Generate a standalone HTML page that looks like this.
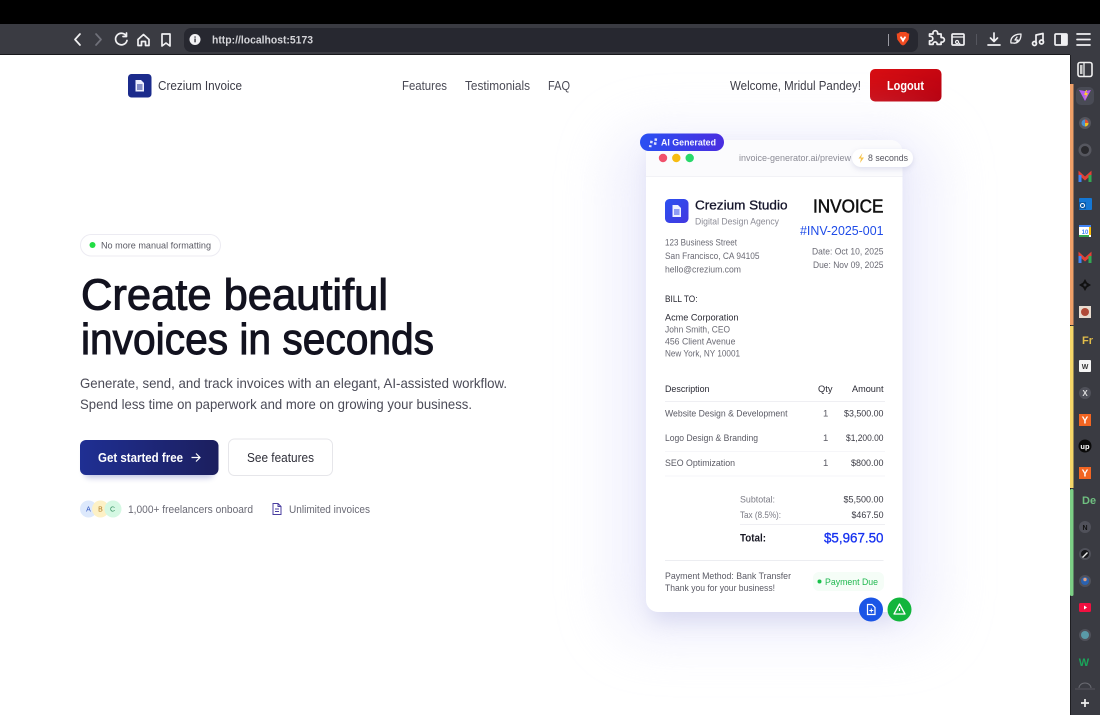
<!DOCTYPE html>
<html><head><meta charset="utf-8"><title>Crezium Invoice</title>
<style>
html,body{margin:0;padding:0;width:1100px;height:715px;overflow:hidden;background:#fff}
svg{display:block;filter:blur(.3px)}
text{font-family:"Liberation Sans",sans-serif;white-space:pre}
.b{font-weight:700}
.s{stroke-width:.3px;stroke:currentColor}
</style></head><body>
<svg width="1100" height="715" viewBox="0 0 1100 715" xmlns="http://www.w3.org/2000/svg">
<defs>
<linearGradient id="navy" x1="0" x2="1" y1="0" y2="0"><stop offset="0" stop-color="#1f2f93"/><stop offset="1" stop-color="#1c1f5e"/></linearGradient>
<linearGradient id="red" x1="0" x2="1" y1="0" y2="1"><stop offset="0" stop-color="#d90d12"/><stop offset="1" stop-color="#b50010"/></linearGradient>
<linearGradient id="ai" x1="0" x2="1" y1="0" y2="0"><stop offset="0" stop-color="#2a50f2"/><stop offset="1" stop-color="#4a2ee0"/></linearGradient>
<linearGradient id="lg" x1="0" x2="1" y1="0" y2="1"><stop offset="0" stop-color="#2b50f0"/><stop offset="1" stop-color="#4338e0"/></linearGradient>
<filter id="glow" x="-50%" y="-50%" width="200%" height="200%"><feGaussianBlur stdDeviation="26"/></filter>
<filter id="sh" x="-30%" y="-30%" width="160%" height="160%"><feGaussianBlur stdDeviation="10"/></filter>
<filter id="sh2" x="-50%" y="-80%" width="200%" height="260%"><feGaussianBlur stdDeviation="3"/></filter>
</defs>

<!-- page -->
<rect x="0" y="55" width="1070" height="660" fill="#fff"/>

<!-- browser chrome -->
<rect x="0" y="0" width="1100" height="24" fill="#000"/>
<rect x="0" y="24" width="1100" height="31" fill="#3a3b42"/>
<rect x="0" y="54" width="1070" height="1" fill="#18181c"/>
<rect x="184" y="28" width="734" height="24" rx="7" fill="#272830"/>
<g fill="none" stroke="#f0f0f2" stroke-width="1.700" stroke-linecap="round" stroke-linejoin="round">
<path d="M80 34l-5 5.500 5 5.500"/>
<path d="M96 34l5 5.500-5 5.500" stroke="#70717a"/>
<path d="M126 35.500a5.800 5.800 0 1 0 1 5M126.500 33v3.500h-3.500"/>
<path d="M138 39.500l5.500-5 5.500 5v6h-3.500v-4h-4v4H138z"/>
<path d="M162 34h8v12l-4-3-4 3z"/>
<path d="M930 36h3.500v-1a2.300 2.300 0 0 1 4.600 0v1h3.500v3.500h1a2.300 2.300 0 0 1 0 4.600h-1v2.300h-4v-1a2.100 2.100 0 0 0-4 0v1H930v-3.500h1a2.300 2.300 0 0 0 0-4.600h-1z" transform="translate(-.5 -2)"/>
<rect x="952" y="34" width="12" height="11" rx="1"/>
<path d="M952 37h12M957 40.500a1.500 1.500 0 1 0 .1 0M959 43l1 1" stroke-width="1.200"/>
<path d="M994 33v8M990.500 38l3.500 3.500 3.500-3.500M988 45h12"/>
<path d="M1011 43c-1-5 3-9 10-9 0 6-3 10-8 9zM1017 37l-2 3h3l-2 3" stroke-width="1.300"/>
<path d="M1036 43V35l7-1.500V41"/><circle cx="1034.500" cy="43.500" r="2"/><circle cx="1041.500" cy="42" r="2"/>
<rect x="1055" y="34" width="12" height="11" rx="1"/>
<path d="M1077 34h13M1077 39.500h13M1077 45h13"/>
</g>
<rect x="1061" y="34" width="6" height="11" fill="#f0f0f2"/>
<circle cx="195" cy="39.500" r="5.500" fill="#f2f2f4"/>
<rect x="194.400" y="38.500" width="1.300" height="3.800" fill="#272830"/><rect x="194.400" y="36.400" width="1.300" height="1.300" fill="#272830"/>
<text x="212" y="43.500" font-size="11" class="b" fill="#d4d4d8" textLength="101" lengthAdjust="spacingAndGlyphs">http://localhost:5173</text>
<rect x="888" y="34" width="1" height="12" fill="#9a9aa2"/>
<rect x="976" y="34" width="1" height="11" fill="#55565e"/>
<path d="M898 33.500l2-1.500h6l2 1.500 1.300 0-.6 6-3.700 5-2 1-2-1-3.700-5-.6-6z" fill="#ef4a20"/>
<path d="M901 36l2 2.500 2-2.500 1 1.500-2 3-1 2-1-2-2-3z" fill="#fff"/>

<!-- sidebar -->
<rect x="1070" y="55" width="30" height="660" fill="#3a3b42"/>
<rect x="1070" y="55" width="1" height="660" fill="#1e1e22"/>
<rect x="1070" y="84" width="3.500" height="241" fill="#f0a068"/>
<rect x="1070" y="326" width="3.500" height="162" fill="#f6d768"/>
<rect x="1070" y="489" width="3.500" height="107" rx="1.500" fill="#7ccf85"/>
<rect x="1078" y="62.500" width="14" height="14" rx="2" fill="none" stroke="#f0f0f0" stroke-width="1.600"/>
<path d="M1084 63v13" stroke="#eee" stroke-width="1.300"/><rect x="1080" y="65" width="2.500" height="9" fill="#ccc"/>
<rect x="1076" y="87" width="18" height="18" rx="5" fill="#494b55"/>
<path d="M1079 90l6 1 6-1-6 11z" fill="#b45cf0"/><path d="M1086 90l-2 5h2l-1 4 3-6h-2l1-3z" fill="#ffd028"/>
<circle cx="1085" cy="123" r="6" fill="#55565e"/><circle cx="1085" cy="123" r="3.500" fill="#4a90d0"/><path d="M1085 119.500a3.500 3.500 0 0 1 3.500 3.500h-3.500z" fill="#e04f30"/><path d="M1085 123h3.500a3.500 3.500 0 0 1-3.500 3.500z" fill="#f0c020"/>
<circle cx="1085" cy="150" r="6.500" fill="#56575f"/><circle cx="1085" cy="150" r="4" fill="#2a2a2e"/>
<g stroke-width="3" fill="none">
<path d="M1080 182v-8l5 4.500 5-4.500v8" stroke="#e44035"/><path d="M1090 175v7" stroke="#34a853"/><path d="M1080 175v7" stroke="#4285f4"/>
<path d="M1080 263v-8l5 4.500 5-4.500v8" stroke="#e44035"/><path d="M1090 256v7" stroke="#34a853"/><path d="M1080 256v7" stroke="#4285f4"/>
</g>
<rect x="1079" y="198" width="13" height="12" rx="1" fill="#1477d4"/><rect x="1079" y="202" width="7" height="7" fill="#0a5aa8"/><circle cx="1082.500" cy="205.500" r="2" fill="none" stroke="#fff"/>
<rect x="1079" y="225" width="12" height="12" fill="#fff"/><path d="M1079 225h12v2h-12z" fill="#4285f4"/><path d="M1079 235h10v2h-10z" fill="#34a853"/><path d="M1091 227v8h-2v-8z" fill="#fbbc04"/>
<text x="1085" y="234" font-size="6" text-anchor="middle" fill="#4285f4" class="b">10</text>
<path d="M1085 279l2 3.500 4 2.500-4 2.500-2 3.500-2-3.500-4-2.500 4-2.500z" fill="#111"/><circle cx="1085" cy="285" r="1.500" fill="#3a3b42"/>
<rect x="1079" y="306" width="12" height="12" fill="#e8dcd0"/><circle cx="1085" cy="312" r="4" fill="#b04a38"/>
<text x="1082" y="344" font-size="11" class="b" fill="#e2bd4a">Fr</text>
<rect x="1079" y="360" width="12" height="12" rx="1" fill="#f4f4f4"/><text x="1085" y="369" font-size="7" class="b" text-anchor="middle" fill="#333">W</text>
<circle cx="1085" cy="393" r="6" fill="#50515a"/><text x="1085" y="396" font-size="8" class="b" text-anchor="middle" fill="#ddd">X</text>
<rect x="1079" y="414" width="12" height="12" fill="#f26522"/><text x="1085" y="423.500" font-size="10" class="b" text-anchor="middle" fill="#fff">Y</text>
<circle cx="1085" cy="446" r="6.500" fill="#0a0a0a"/><text x="1085" y="449" font-size="7.500" class="b" text-anchor="middle" fill="#fff">up</text>
<rect x="1079" y="467" width="12" height="12" fill="#f26522"/><text x="1085" y="476.500" font-size="10" class="b" text-anchor="middle" fill="#fff">Y</text>
<text x="1082" y="504" font-size="11" class="b" fill="#6fbf80">De</text>
<circle cx="1085" cy="527" r="6" fill="#50515a"/><text x="1085" y="530" font-size="7" class="b" text-anchor="middle" fill="#111">N</text>
<circle cx="1085" cy="554" r="6" fill="#50515a"/><circle cx="1085" cy="554" r="4" fill="#18181c"/><path d="M1082 557l5-5 1 1-5 5z" fill="#eee"/>
<circle cx="1085" cy="581" r="6" fill="#50515a"/><circle cx="1085" cy="581" r="4" fill="#2a62b0"/><circle cx="1085" cy="579.500" r="1.700" fill="#e0a080"/>
<rect x="1079" y="603" width="12" height="9" rx="1.500" fill="#f01040"/><path d="M1084 605.500l3 2-3 2z" fill="#fff"/>
<circle cx="1085" cy="635" r="6" fill="#50515a"/><circle cx="1085" cy="635" r="4" fill="#5a9aa8"/>
<text x="1084" y="666" font-size="11" class="b" text-anchor="middle" fill="#1aa55a">W</text>
<path d="M1075 689h20" stroke="#55565e"/><path d="M1079 688a6 5 0 0 1 12 0" fill="none" stroke="#6a6b72"/>
<path d="M1085 699v8M1081 703h8" stroke="#eee" stroke-width="1.700"/>

<!-- nav -->
<rect x="128" y="74" width="23.500" height="23.500" rx="3.500" fill="#1b2b8c"/>
<path d="M135.500 80h5.500l3 3v8.500h-8.500z" fill="#eef0ff"/><path d="M137 85h5.500M137 87h5.500M137 89h5.500" stroke="#1b2b8c" stroke-width="1"/>
<text x="158" y="90" font-size="12.500" fill="#3b3b46" textLength="84" lengthAdjust="spacingAndGlyphs">Crezium Invoice</text>
<text x="402" y="90" font-size="12.500" fill="#4a4a55" textLength="45" lengthAdjust="spacingAndGlyphs">Features</text>
<text x="465" y="90" font-size="12.500" fill="#4a4a55" textLength="65" lengthAdjust="spacingAndGlyphs">Testimonials</text>
<text x="548" y="90" font-size="12.500" fill="#4a4a55" textLength="22" lengthAdjust="spacingAndGlyphs">FAQ</text>
<text x="730" y="90" font-size="12.500" fill="#3a3a44" textLength="131" lengthAdjust="spacingAndGlyphs">Welcome, Mridul Pandey!</text>
<rect x="870" y="69" width="71.500" height="32.500" rx="5" fill="url(#red)"/>
<text x="887" y="90" font-size="13" class="b" fill="#fff" textLength="37" lengthAdjust="spacingAndGlyphs">Logout</text>

<!-- hero -->
<rect x="80.500" y="234.500" width="140" height="21.500" rx="10.700" fill="#fff" stroke="#ecebf2"/>
<circle cx="92.500" cy="245" r="3" fill="#22dd44"/>
<text x="101" y="248.500" font-size="9.500" fill="#5a5a64" textLength="110" lengthAdjust="spacingAndGlyphs">No more manual formatting</text>
<text x="81" y="309.500" font-size="44" fill="#12121f" stroke="#12121f" stroke-width="1" textLength="307" lengthAdjust="spacingAndGlyphs">Create beautiful</text>
<text x="81" y="354" font-size="44" fill="#12121f" stroke="#12121f" stroke-width="1" textLength="353" lengthAdjust="spacingAndGlyphs">invoices in seconds</text>
<text x="80" y="388" font-size="14" fill="#4b4b57" textLength="427" lengthAdjust="spacingAndGlyphs">Generate, send, and track invoices with an elegant, AI-assisted workflow.</text>
<text x="80" y="409" font-size="14" fill="#4b4b57" textLength="392" lengthAdjust="spacingAndGlyphs">Spend less time on paperwork and more on growing your business.</text>

<rect x="84" y="446" width="130" height="32" rx="6" fill="#2a3aa0" opacity=".28" filter="url(#sh2)"/>
<rect x="80" y="440" width="138.500" height="35" rx="6" fill="url(#navy)"/>
<text x="98" y="462" font-size="13" class="b" fill="#fff" textLength="85" lengthAdjust="spacingAndGlyphs">Get started free</text>
<path d="M191.500 457.500h8M196 453.500l4 4-4 4" fill="none" stroke="#fff" stroke-width="1.200"/>
<rect x="228.500" y="439" width="104" height="36.500" rx="6" fill="#fff" stroke="#e6e6ea"/>
<text x="247" y="462" font-size="13" fill="#2f2f39" textLength="67" lengthAdjust="spacingAndGlyphs">See features</text>

<circle cx="88.500" cy="509" r="8.500" fill="#dde9fc"/><circle cx="100.500" cy="509" r="8.500" fill="#fdf1c6"/><circle cx="113" cy="509" r="8.500" fill="#d5f8e3"/>
<text x="88.500" y="511.500" font-size="7" text-anchor="middle" fill="#2f55c0">A</text>
<text x="100.500" y="511.500" font-size="7" text-anchor="middle" fill="#b07a20">B</text>
<text x="112.500" y="511.500" font-size="7" text-anchor="middle" fill="#2d8a5a">C</text>
<text x="128" y="513" font-size="11" fill="#6a6a75" textLength="125" lengthAdjust="spacingAndGlyphs">1,000+ freelancers onboard</text>
<path d="M273 503.500h5l3 3v8h-8zM278 503.500v3h3M275 509h4M275 511.500h4" fill="none" stroke="#4b3fa0" stroke-width="1"/>
<text x="289" y="513" font-size="11" fill="#6a6a75" textLength="81" lengthAdjust="spacingAndGlyphs">Unlimited invoices</text>

<!-- card glow + card -->
<rect x="610" y="130" width="330" height="510" rx="40" fill="#e6e6fb" opacity=".6" filter="url(#glow)"/>
<rect x="650" y="150" width="248" height="472" rx="12" fill="#c6c8e8" opacity=".55" filter="url(#sh)"/>
<rect x="646" y="140" width="256.500" height="472" rx="12" fill="#fff"/>
<path d="M646 176v-24a12 12 0 0 1 12-12h232.500a12 12 0 0 1 12 12v24z" fill="#fbfbfd"/>
<rect x="646" y="176" width="256.500" height="1" fill="#f2f2f6"/>

<rect x="640" y="133.500" width="84" height="17.500" rx="8.700" fill="url(#ai)"/>
<path d="M650 141h2.500v2.500H650zM654 138h2.500v2.500H654zM654 142h2.500v2.500H654zM649.500 145.500h2.500v2h-2.500z" fill="#dfe4ff" transform="rotate(8 653 143)"/>
<text x="661" y="145.700" font-size="9.500" class="b" fill="#f4f4ff" textLength="55" lengthAdjust="spacingAndGlyphs">AI Generated</text>
<circle cx="663" cy="158" r="4.200" fill="#f0506c"/><circle cx="676.300" cy="158" r="4.200" fill="#f7bc12"/><circle cx="689.700" cy="158" r="4.200" fill="#28d86a"/>
<text x="739" y="161" font-size="9.500" fill="#8c8c96" textLength="112" lengthAdjust="spacingAndGlyphs">invoice-generator.ai/preview</text>
<rect x="852" y="151" width="61" height="18" rx="9" fill="#b9bbd8" opacity=".45" filter="url(#sh2)"/>
<rect x="852" y="149" width="61" height="18" rx="9" fill="#fff"/>
<path d="M862.500 153l-4 5.500h2.500l-1 4.500 4-5.500H861z" fill="#f7c34a"/>
<text x="868" y="161" font-size="9.500" fill="#55555f" textLength="40" lengthAdjust="spacingAndGlyphs">8 seconds</text>

<rect x="665" y="199" width="23.500" height="24" rx="4.500" fill="url(#lg)"/>
<path d="M672.500 205h5.500l3 3v9h-8.500z" fill="#eef0ff"/><path d="M674 210h5.500M674 212h5.500M674 214h5.500" stroke="#3048e8" stroke-width="1"/>
<text x="695" y="209.500" font-size="13" fill="#14142a" class="s" style="color:#14142a" textLength="92.500" lengthAdjust="spacingAndGlyphs">Crezium Studio</text>
<text x="695" y="224.500" font-size="9.500" fill="#8c8c96" textLength="84" lengthAdjust="spacingAndGlyphs">Digital Design Agency</text>
<text x="813" y="212.500" font-size="18" fill="#111" stroke="#111" stroke-width=".5" textLength="70.500" lengthAdjust="spacingAndGlyphs">INVOICE</text>
<text x="800" y="235" font-size="12.500" fill="#1f4ce8" textLength="83.500" lengthAdjust="spacingAndGlyphs">#INV-2025-001</text>
<g font-size="9.500" fill="#6a6a74">
<text x="665" y="245.500" textLength="72" lengthAdjust="spacingAndGlyphs">123 Business Street</text>
<text x="665" y="259" textLength="94.500" lengthAdjust="spacingAndGlyphs">San Francisco, CA 94105</text>
<text x="665" y="272.500" textLength="76" lengthAdjust="spacingAndGlyphs">hello@crezium.com</text>
<text x="812" y="254.500" textLength="71.500" lengthAdjust="spacingAndGlyphs">Date: Oct 10, 2025</text>
<text x="813" y="268" textLength="70.500" lengthAdjust="spacingAndGlyphs">Due: Nov 09, 2025</text>
</g>
<text x="665" y="302" font-size="9.500" fill="#2a2a34" textLength="32.500" lengthAdjust="spacingAndGlyphs">BILL TO:</text>
<text x="665" y="320.500" font-size="9.500" fill="#2a2a34" textLength="73.500" lengthAdjust="spacingAndGlyphs">Acme Corporation</text>
<g font-size="9.500" fill="#6a6a74">
<text x="665" y="332.500" textLength="65" lengthAdjust="spacingAndGlyphs">John Smith, CEO</text>
<text x="665" y="344.500" textLength="70.500" lengthAdjust="spacingAndGlyphs">456 Client Avenue</text>
<text x="665" y="356.500" textLength="75" lengthAdjust="spacingAndGlyphs">New York, NY 10001</text>
</g>
<g font-size="9.500" fill="#2a2a34">
<text x="665" y="392" textLength="44.500" lengthAdjust="spacingAndGlyphs">Description</text>
<text x="818" y="392" textLength="14.500" lengthAdjust="spacingAndGlyphs">Qty</text>
<text x="852" y="392" textLength="31.500" lengthAdjust="spacingAndGlyphs">Amount</text>
</g>
<rect x="665" y="401" width="220" height="1" fill="#efeff3"/>
<rect x="665" y="451" width="220" height="1" fill="#f6f6f9"/>
<rect x="665" y="475.500" width="220" height="1" fill="#f6f6f9"/>
<g font-size="9.500" fill="#5a5a64">
<text x="665" y="416.500" textLength="122.500" lengthAdjust="spacingAndGlyphs">Website Design &amp; Development</text>
<text x="665" y="441" textLength="93" lengthAdjust="spacingAndGlyphs">Logo Design &amp; Branding</text>
<text x="665" y="466" textLength="70" lengthAdjust="spacingAndGlyphs">SEO Optimization</text>
<text x="823" y="416.500">1</text><text x="823" y="441">1</text><text x="823" y="466">1</text>
</g>
<g font-size="9.500" fill="#3a3a44">
<text x="844" y="416.500" textLength="39.500" lengthAdjust="spacingAndGlyphs">$3,500.00</text>
<text x="846" y="441" textLength="37.500" lengthAdjust="spacingAndGlyphs">$1,200.00</text>
<text x="851" y="466" textLength="32.500" lengthAdjust="spacingAndGlyphs">$800.00</text>
<text x="843.500" y="502.500" textLength="40" lengthAdjust="spacingAndGlyphs">$5,500.00</text>
<text x="851.500" y="518" textLength="32" lengthAdjust="spacingAndGlyphs">$467.50</text>
</g>
<text x="740" y="502.500" font-size="9.500" fill="#7a7a84" textLength="35" lengthAdjust="spacingAndGlyphs">Subtotal:</text>
<text x="740" y="518" font-size="9.500" fill="#7a7a84" textLength="41" lengthAdjust="spacingAndGlyphs">Tax (8.5%):</text>
<rect x="740" y="524" width="145" height="1" fill="#efeff3"/>
<text x="740" y="541.500" font-size="11" class="b" fill="#1a1a26" textLength="26" lengthAdjust="spacingAndGlyphs">Total:</text>
<text x="824" y="542.500" font-size="14" fill="#1530f0" class="s" style="color:#1530f0" textLength="59.500" lengthAdjust="spacingAndGlyphs">$5,967.50</text>
<rect x="665" y="560" width="218.500" height="1" fill="#ecedf1"/>
<text x="665" y="579" font-size="9.500" fill="#5a5a64" textLength="126" lengthAdjust="spacingAndGlyphs">Payment Method: Bank Transfer</text>
<text x="665" y="591" font-size="9.500" fill="#5a5a64" textLength="110" lengthAdjust="spacingAndGlyphs">Thank you for your business!</text>
<rect x="813" y="572" width="71" height="19" rx="6" fill="#f5fdf7"/>
<circle cx="819.500" cy="581.500" r="2" fill="#18c24a"/>
<text x="825" y="585" font-size="9.500" fill="#1fb84f" textLength="53" lengthAdjust="spacingAndGlyphs">Payment Due</text>

<circle cx="871" cy="609.500" r="12" fill="#1a55e6"/>
<path d="M867.500 604.500h4.500l3 3v7h-7.500z" fill="none" stroke="#fff" stroke-width="1.200"/><path d="M871.300 608.500v4M869.300 610.500h4" stroke="#fff"/>
<circle cx="899.500" cy="609.500" r="12" fill="#12b53c"/>
<path d="M899.500 604l5.500 10h-11zM899.500 608v3" fill="none" stroke="#fff" stroke-width="1.300" stroke-linejoin="round"/>
</svg>
</body></html>
